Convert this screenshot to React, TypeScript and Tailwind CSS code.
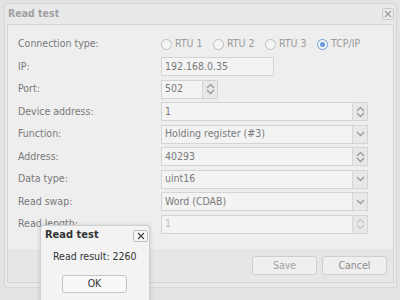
import React from "react";

const font = { fontFamily: '"DejaVu Sans Condensed", "Liberation Sans", sans-serif' };

function Spinner({ disabled }: { disabled?: boolean }) {
  const c = disabled ? "#c4c4c4" : "#9a9a9a";
  return (
    <div className="flex flex-col items-center justify-center w-[15px] h-full border-l border-[#d6d6d6] bg-[#e8e8e8]">
      <svg width="9" height="6" viewBox="0 0 9 6"><path d="M1 5 L4.5 1.5 L8 5" stroke={c} strokeWidth="1.3" fill="none" /></svg>
      <svg width="9" height="6" viewBox="0 0 9 6"><path d="M1 1 L4.5 4.5 L8 1" stroke={c} strokeWidth="1.3" fill="none" /></svg>
    </div>
  );
}

function Arrow() {
  return (
    <div className="flex items-center justify-center w-[15px] h-full border-l border-[#d6d6d6] bg-[#e8e8e8]">
      <svg width="9" height="6" viewBox="0 0 9 6"><path d="M1 1 L4.5 4.5 L8 1" stroke="#9a9a9a" strokeWidth="1.3" fill="none" /></svg>
    </div>
  );
}

function Field({ value, w = "w-[207px]", spin, select, disabled }: { value: string; w?: string; spin?: boolean; select?: boolean; disabled?: boolean }) {
  return (
    <div className={`flex h-[19px] ${w} border border-[#d4d4d4] bg-[#f3f3f3]`}>
      <div className={`flex-1 flex items-center pl-[3px] text-[10.5px] ${disabled ? "text-[#c0c0c0]" : "text-[#7a7a7a]"}`}>{value}</div>
      {spin && <Spinner disabled={disabled} />}
      {select && <Arrow />}
    </div>
  );
}

function Radio({ label, checked }: { label: string; checked?: boolean }) {
  return (
    <div className="flex items-center gap-[3px] w-[52px]">
      <div className={`w-[11px] h-[11px] rounded-full border ${checked ? "border-[#6b9be0]" : "border-[#bdbdbd]"} bg-[#f5f5f5] flex items-center justify-center`}>
        {checked && <div className="w-[5px] h-[5px] rounded-full bg-[#6b9be0]" />}
      </div>
      <span className="text-[10.5px] text-[#9a9a9a] whitespace-nowrap">{label}</span>
    </div>
  );
}

function Row({ label, children }: { label: string; children: React.ReactNode }) {
  return (
    <div className="flex items-center h-[22.5px]">
      <div className="w-[143px] text-[10.5px] text-[#7a7a7a] whitespace-nowrap">{label}</div>
      {children}
    </div>
  );
}

export default function App() {
  return (
    <div className="w-[400px] h-[300px] bg-[#e3e3e3] relative overflow-hidden" style={font}>
      <div className="absolute left-[4px] top-[3px] w-[393px] h-[285px] border border-[#d6d6d6] bg-[#e9e9e9] rounded-[3px] flex flex-col">
        <div className="h-[20px] flex items-center justify-between pl-[3px] pr-[2px]">
          <span className="text-[10.5px] font-bold text-[#a0a0a0]">Read test</span>
          <div className="w-[12px] h-[12px] border border-[#c8c8c8] rounded-[2px] flex items-center justify-center bg-[#ededed]">
            <svg width="8" height="8" viewBox="0 0 8 8"><path d="M1 1 L7 7 M7 1 L1 7" stroke="#9a9a9a" strokeWidth="1.2" /></svg>
          </div>
        </div>
        <div className="mx-[2px] flex-1 border border-[#d6d6d6] bg-[#eeeeee] flex flex-col mb-[4px]">
          <div className="pl-[10px] pt-[8px]">
            <Row label="Connection type:">
              <div className="flex items-center">
                <Radio label="RTU 1" />
                <Radio label="RTU 2" />
                <Radio label="RTU 3" />
                <Radio label="TCP/IP" checked />
              </div>
            </Row>
            <Row label="IP:"><Field value="192.168.0.35" w="w-[113px]" /></Row>
            <Row label="Port:"><Field value="502" w="w-[57px]" spin /></Row>
            <Row label="Device address:"><Field value="1" spin /></Row>
            <Row label="Function:"><Field value="Holding register (#3)" select /></Row>
            <Row label="Address:"><Field value="40293" spin /></Row>
            <Row label="Data type:"><Field value="uint16" select /></Row>
            <Row label="Read swap:"><Field value="Word (CDAB)" select /></Row>
            <Row label="Read length:"><Field value="1" spin disabled /></Row>
          </div>
          <div className="mt-auto h-[33px] bg-[#e6e6e6] flex items-center justify-end gap-[5px] pr-[6px]">
            <div className="w-[65px] h-[19px] border border-[#cfcfcf] rounded-[3px] bg-[#efefef] flex items-center justify-center text-[10.5px] text-[#a0a0a0]">Save</div>
            <div className="w-[65px] h-[19px] border border-[#cfcfcf] rounded-[3px] bg-[#efefef] flex items-center justify-center text-[10.5px] text-[#8a8a8a]">Cancel</div>
          </div>
        </div>
      </div>
      <div className="absolute left-[40px] top-[225px] w-[110px] h-[90px] bg-[#f3f3f3] border border-[#cfcfcf] rounded-[3px] shadow-[0_0_4px_rgba(0,0,0,0.15)]">
        <div className="h-[19px] flex items-center justify-between pl-[4px] pr-[1px]">
          <span className="text-[11px] font-bold text-[#333]">Read test</span>
          <div className="w-[15px] h-[12px] border border-[#bdbdbd] rounded-[2px] flex items-center justify-center bg-[#f7f7f7]">
            <svg width="8" height="8" viewBox="0 0 8 8"><path d="M1 1 L7 7 M7 1 L1 7" stroke="#444" strokeWidth="1.2" /></svg>
          </div>
        </div>
        <div className="text-[10.5px] leading-[13px] text-[#333] pl-[12px] mt-[5px] whitespace-nowrap">Read result: 2260</div>
        <div className="ml-[21px] mt-[12px] w-[65px] h-[18px] border border-[#c4c4c4] rounded-[3px] bg-[#f8f8f8] flex items-center justify-center text-[10.5px] text-[#333]">OK</div>
      </div>
    </div>
  );
}
